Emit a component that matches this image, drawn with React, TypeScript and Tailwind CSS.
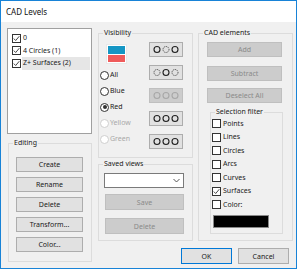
import React from "react";

const font = { fontFamily: '"Noto Sans", "Liberation Sans", sans-serif' };

function Btn({ label, disabled, className = "" }: { label: string; disabled?: boolean; className?: string }) {
  return (
    <div
      className={
        "flex items-center justify-center border text-[7px] leading-none " +
        (disabled ? "bg-[#cccccc] border-[#bfbfbf] text-[#8a8a8a] " : "bg-[#e1e1e1] border-[#adadad] text-[#1a1a1a] ") +
        className
      }
    >
      {label}
    </div>
  );
}

function Group({ label, className = "", children }: { label: string; className?: string; children?: React.ReactNode }) {
  return (
    <div className={"relative border border-[#dcdcdc] " + className}>
      <span className="absolute left-[4px] top-[-6px] bg-[#f0f0f0] px-[1px] text-[7px] leading-[10px] text-[#1a1a1a]">
        {label}
      </span>
      {children}
    </div>
  );
}

function Check({ checked }: { checked?: boolean }) {
  return (
    <div className="w-[9px] h-[9px] border border-[#333333] bg-white flex items-center justify-center shrink-0">
      {checked && (
        <svg width="7" height="7" viewBox="0 0 7 7">
          <path d="M0.8 3.6 L2.7 5.5 L6.3 1.2" fill="none" stroke="#333" strokeWidth="0.9" />
        </svg>
      )}
    </div>
  );
}

function Radio({ checked, disabled }: { checked?: boolean; disabled?: boolean }) {
  return (
    <div
      className={
        "w-[9px] h-[9px] rounded-full border bg-white flex items-center justify-center shrink-0 " +
        (disabled ? "border-[#cfcfcf]" : "border-[#333333]")
      }
    >
      {checked && <div className="w-[4px] h-[4px] rounded-full bg-[#333333]" />}
    </div>
  );
}

function Circles({ pattern, disabled }: { pattern: boolean[]; disabled?: boolean }) {
  const color = disabled ? "#a8a8a8" : "#222";
  return (
    <div
      className={
        "w-[34px] h-[15px] border flex items-center justify-center " +
        (disabled ? "bg-[#cccccc] border-[#bfbfbf]" : "bg-[#e1e1e1] border-[#adadad]")
      }
    >
      <svg width="28" height="9" viewBox="0 0 28 9">
        {pattern.map((solid, i) => (
          <circle
            key={i}
            cx={5 + i * 9}
            cy={4.5}
            r={3}
            fill="none"
            stroke={color}
            strokeWidth={solid ? 1.1 : 0.9}
            strokeDasharray={solid ? undefined : "1 1"}
          />
        ))}
      </svg>
    </div>
  );
}

export default function App() {
  const radios = [
    { label: "All" },
    { label: "Blue" },
    { label: "Red", checked: true },
    { label: "Yellow", disabled: true },
    { label: "Green", disabled: true },
  ];
  const filters = ["Points", "Lines", "Circles", "Arcs", "Curves", "Surfaces", "Color:"];
  return (
    <div className="w-[298px] h-[272px] bg-white" style={font}>
      <div className="w-[297px] h-[269px] border border-[#1883d7] flex flex-col">
        <div className="h-[21px] shrink-0 bg-white flex items-center pl-[5px] text-[8px] text-[#111]">CAD Levels</div>
        <div className="flex-1 bg-[#f0f0f0] flex items-start">
          {/* Left column */}
          <div className="ml-[6px] mt-[6px] w-[85px] flex flex-col">
            <div className="h-[106px] bg-white border border-[#a0a0a0] pt-[3px] pl-[4px] pr-[1px] flex flex-col text-[7px] text-[#1a1a1a]">
              {["0", "4 Circles (1)", "Z+ Surfaces (2)"].map((t, i) => (
                <div key={t} className="h-[12.5px] flex items-center">
                  <Check checked />
                  <span className={"ml-[1px] pl-[1px] flex-1 h-full flex items-center " + (i === 2 ? "bg-[#e6e6e6]" : "")}>{t}</span>
                </div>
              ))}
            </div>
            <Group label="Editing" className="ml-[1px] mt-[9px] h-[119px] pt-[13px] pl-[7px] pr-[7px] flex flex-col gap-[5px]">
              {["Create", "Rename", "Delete", "Transform...", "Color..."].map((b) => (
                <Btn key={b} label={b} className="h-[15px] w-[67px]" />
              ))}
            </Group>
          </div>

          {/* Right area */}
          <div className="ml-[6px] mt-[11px] flex flex-col">
            <div className="flex items-start">
              {/* Middle column */}
              <div className="w-[95px] flex flex-col">
                <Group label="Visibility" className="h-[125px] flex justify-between pl-[1px] pr-[9px] pt-[8px]">
                  <div className="flex flex-col">
                    <div className="ml-[6px] mt-[2px] w-[21px] h-[20px] bg-white border border-[#e8e8e8] p-[1px] flex flex-col gap-[1px]">
                      <div className="flex-1 bg-[#1596c4]" />
                      <div className="flex-1 bg-[#ef5b5b]" />
                    </div>
                    <div className="mt-[3px] flex flex-col">
                      {radios.map((r) => (
                        <div key={r.label} className="h-[16px] flex items-center">
                          <Radio checked={r.checked} disabled={r.disabled} />
                          <span className={"ml-[1px] text-[7px] " + (r.disabled ? "text-[#a8a8a8]" : "text-[#1a1a1a]")}>
                            {r.label}
                          </span>
                        </div>
                      ))}
                    </div>
                  </div>
                  <div className="flex flex-col gap-[8px]">
                    <Circles pattern={[true, false, true]} />
                    <Circles pattern={[false, true, false]} />
                    <Circles pattern={[true, true, true]} disabled />
                    <Circles pattern={[true, true, true]} />
                    <Circles pattern={[true, true, true]} />
                  </div>
                </Group>
                <Group label="Saved views" className="mt-[6px] h-[77px] pl-[5px] pt-[8px] flex flex-col">
                  <div className="w-[80px] h-[15px] bg-white border border-[#7a7a7a] flex items-center justify-end pr-[3px]">
                    <svg width="7" height="5" viewBox="0 0 7 5">
                      <path d="M0.5 1 L3.5 4 L6.5 1" fill="none" stroke="#444" strokeWidth="0.9" />
                    </svg>
                  </div>
                  <Btn label="Save" disabled className="mt-[6px] ml-[1px] w-[79px] h-[16px]" />
                  <Btn label="Delete" disabled className="mt-[8px] ml-[1px] w-[79px] h-[16px]" />
                </Group>
              </div>

              {/* Right column */}
              <div className="ml-[5px] w-[95px]">
                <Group label="CAD elements" className="h-[208px] pt-[8px] flex flex-col">
                  <div className="pl-[8px] flex flex-col">
                    <Btn label="Add" disabled className="w-[75px] h-[15px]" />
                    <Btn label="Subtract" disabled className="mt-[9px] w-[75px] h-[15px]" />
                    <Btn label="Deselect All" disabled className="mt-[7px] w-[75px] h-[15px]" />
                  </div>
                  <Group label="Selection filter" className="ml-[11px] mt-[9px] w-[73px] h-[122px] pt-[4px] pl-[1px] flex flex-col">
                    {filters.map((f) => (
                      <div key={f} className="h-[13.5px] flex items-center">
                        <Check checked={f === "Surfaces"} />
                        <span className="ml-[2px] text-[7px] text-[#1a1a1a]">{f}</span>
                      </div>
                    ))}
                    <div className="mt-[3px] ml-[1px] w-[56px] h-[13px] bg-black border border-[#888]" />
                  </Group>
                </Group>
              </div>
            </div>

            <div className="flex justify-end gap-[6px] mr-[4px] mt-[7px]">
              <Btn label="OK" className="w-[51px] h-[16px] !border-[#0078d7]" />
              <Btn label="Cancel" className="w-[51px] h-[16px]" />
            </div>
          </div>
        </div>
      </div>
    </div>
  );
}
